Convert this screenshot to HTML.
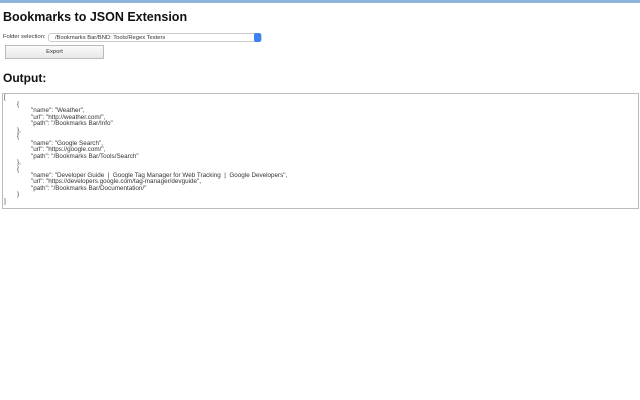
<!DOCTYPE html>
<html><head><style>
body{margin:0;width:640px;height:400px;background:#fff;font-family:"Liberation Sans",sans-serif;position:relative;overflow:hidden}
.bar{position:absolute;left:0;top:0;width:640px;height:3px;background:#8fb4de}
h1{position:absolute;left:3px;top:10px;margin:0;font-size:12.5px;font-weight:bold;color:#111}
.lbl{position:absolute;left:3px;top:34px;font-size:5.8px;color:#333}
.sel{position:absolute;left:48px;top:33px;width:214px;height:9px;border:1px solid #ccc;border-radius:3px;box-sizing:border-box;font-size:5.8px;color:#333;padding-left:6px;line-height:8px}
.sel i{position:absolute;right:0;top:-1px;width:7px;height:9px;background:#3b82f6;border-radius:2px}
.btn{position:absolute;left:5px;top:45px;width:99px;height:14px;border:1px solid #bbb;box-sizing:border-box;background:linear-gradient(#fafafa,#e8e8e8);font-size:5.8px;color:#333;text-align:center;line-height:13px}
h2{position:absolute;left:3px;top:71px;margin:0;font-size:12px;font-weight:bold;color:#111}
.ta{position:absolute;left:2px;top:93px;width:637px;height:116px;border:1px solid #bbb;box-sizing:border-box}
.l{position:absolute;font-size:6.3px;line-height:7px;color:#333;white-space:pre}
</style></head><body>
<div class="bar"></div>
<h1>Bookmarks to JSON Extension</h1>
<div class="lbl">Folder selection:</div>
<div class="sel">/Bookmarks Bar/BND: Tools/Regex Testers<i></i></div>
<div class="btn">Export</div>
<h2>Output:</h2>
<div class="ta"></div>
<div class="l" style="left:4px;top:94px">[</div>
<div class="l" style="left:17px;top:101px">{</div>
<div class="l" style="left:31px;top:107px">"name": "Weather",</div>
<div class="l" style="left:31px;top:114px">"url": "http://weather.com/",</div>
<div class="l" style="left:31px;top:120px">"path": "/Bookmarks Bar/Info"</div>
<div class="l" style="left:17px;top:127px">},</div>
<div class="l" style="left:17px;top:133px">{</div>
<div class="l" style="left:31px;top:140px">"name": "Google Search",</div>
<div class="l" style="left:31px;top:146px">"url": "https://google.com/",</div>
<div class="l" style="left:31px;top:153px">"path": "/Bookmarks Bar/Tools/Search"</div>
<div class="l" style="left:17px;top:159px">},</div>
<div class="l" style="left:17px;top:166px">{</div>
<div class="l" style="left:31px;top:172px">"name": "Developer Guide  |  Google Tag Manager for Web Tracking  |  Google Developers",</div>
<div class="l" style="left:31px;top:178px">"url": "https://developers.google.com/tag-manager/devguide",</div>
<div class="l" style="left:31px;top:185px">"path": "/Bookmarks Bar/Documentation/"</div>
<div class="l" style="left:17px;top:191px">}</div>
<div class="l" style="left:4px;top:198px">]</div>
</body></html>
